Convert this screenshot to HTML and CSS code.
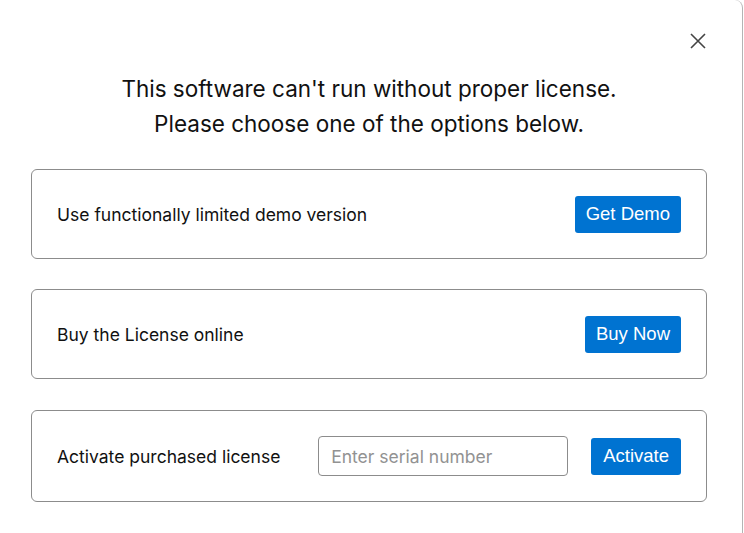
FILE: index.html
```html
<!DOCTYPE html>
<html>
<head>
<meta charset="utf-8">
<link rel="stylesheet" href="styles.css">
</head>
<body>
<div class="dialog">
  <button class="close" aria-label="Close">
    <svg width="16" height="16" viewBox="0 0 16 16"><path d="M1 1L15 15M15 1L1 15" stroke="#444" stroke-width="1.6" fill="none"/></svg>
  </button>
  <h1 class="title">This software can't run without proper license.<br>Please choose one of the options below.</h1>
  <div class="options">
    <div class="card">
      <span class="label">Use functionally limited demo version</span>
      <button class="btn">Get Demo</button>
    </div>
    <div class="card">
      <span class="label">Buy the License online</span>
      <button class="btn">Buy Now</button>
    </div>
    <div class="card card-last">
      <span class="label">Activate purchased license</span>
      <div class="activate">
        <input class="serial" type="text" placeholder="Enter serial number">
        <button class="btn btn-activate">Activate</button>
      </div>
    </div>
  </div>
</div>
</body>
</html>
```
FILE: styles.css
```css
html, body {
  margin: 0;
  padding: 0;
  background: #fff;
}
body {
  font-family: Inter, "Noto Sans", sans-serif;
  color: #111;
}
.dialog {
  position: relative;
  width: 743px;
  height: 533px;
  box-sizing: border-box;
  border-right: 1px solid #b4b4b4;
  border-top-right-radius: 8px;
  padding: 71px 35px 0 31px;
}
.close {
  position: absolute;
  top: 32px;
  right: 35px;
  width: 18px;
  height: 18px;
  padding: 0;
  border: 0;
  background: none;
  display: flex;
  align-items: center;
  justify-content: center;
}
.title {
  margin: 0 0 28px;
  font-size: 22.5px;
  font-weight: 400;
  line-height: 35px;
  text-align: center;
  color: #111;
}
.options {
  display: flex;
  flex-direction: column;
  gap: 30px;
}
.card {
  height: 90px;
  box-sizing: border-box;
  border: 1px solid #8c8c8c;
  border-radius: 6px;
  display: flex;
  align-items: center;
  justify-content: space-between;
  padding: 0 25px 0 25px;
}
.card-last {
  height: 92px;
  margin-top: 1px;
}
.label {
  font-size: 17.5px;
}
.btn {
  font-family: "Liberation Sans", Arial, sans-serif;
  font-size: 18.5px;
  color: #fff;
  background: #0073d1;
  border: 0;
  border-radius: 3px;
  height: 37px;
  padding: 0 11px;
}
.btn-activate {
  padding: 0 12px;
}
.activate {
  display: flex;
  align-items: center;
  gap: 23px;
}
.serial {
  width: 250px;
  height: 40px;
  box-sizing: border-box;
  border: 1px solid #8c8c8c;
  border-radius: 4px;
  padding: 0 12px;
  font-family: Inter, sans-serif;
  font-size: 17.5px;
  color: #111;
}
.serial::placeholder {
  color: #929292;
}
```
